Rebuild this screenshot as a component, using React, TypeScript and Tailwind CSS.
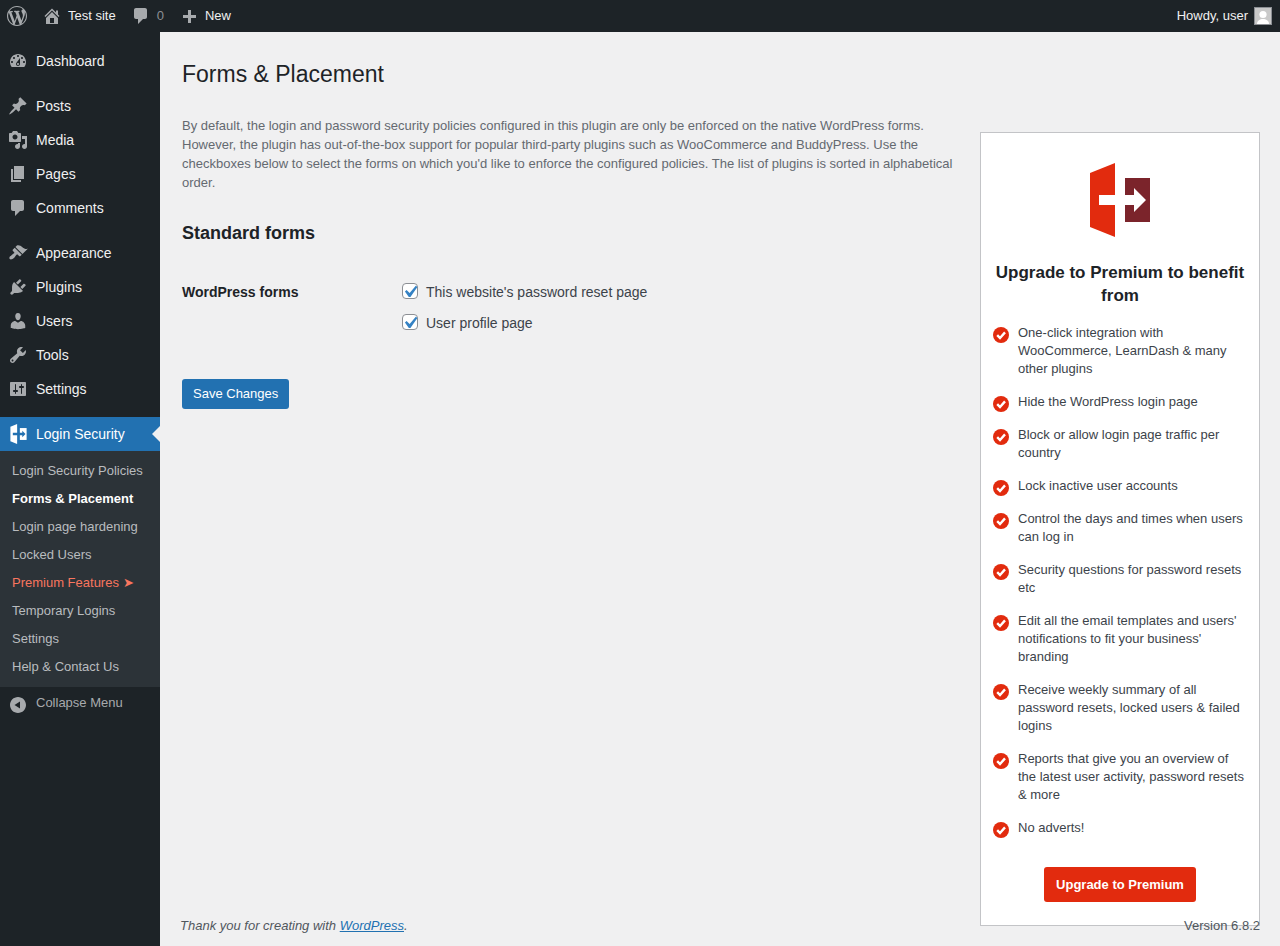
import React from "react";

const icons: Record<string, string> = {
  wordpress:
    "M20 10c0-5.51-4.49-10-10-10C4.48 0 0 4.49 0 10c0 5.52 4.48 10 10 10 5.51 0 10-4.48 10-10zM7.78 15.37L4.37 6.22c.55-.02 1.17-.08 1.17-.08.5-.06.44-1.13-.06-1.11 0 0-1.45.11-2.37.11-.18 0-.37 0-.58-.01C4.12 2.69 6.87 1.11 10 1.11c2.33 0 4.45.87 6.05 2.34-.68-.11-1.65.39-1.65 1.58 0 .74.45 1.36.9 2.1.35.61.55 1.36.55 2.46 0 1.49-1.4 5-1.4 5l-3.03-8.37c.54-.02.82-.17.82-.17.5-.05.44-1.25-.06-1.22 0 0-1.44.12-2.38.12-.87 0-2.33-.12-2.33-.12-.5-.03-.56 1.2-.06 1.22l.92.08 1.26 3.41zM17.41 10c.24-.64.74-1.87.43-4.25.7 1.29 1.05 2.71 1.05 4.25 0 3.29-1.73 6.24-4.4 7.78.97-2.59 1.94-5.2 2.92-7.78zM6.1 18.09C3.12 16.65 1.11 13.53 1.11 10c0-1.3.23-2.48.72-3.59C3.25 10.3 4.67 14.2 6.1 18.09zm4.03-6.63l2.58 6.98c-.86.29-1.76.45-2.71.45-.79 0-1.57-.11-2.29-.33.81-2.38 1.62-4.74 2.42-7.1z",
  home: "M16 8.5l1.53 1.53-1.06 1.06L10 4.62l-6.47 6.47-1.06-1.06L10 2.5l4 4v-2h2v4zm-6-2.46l6 5.99V18H4v-5.97zM12 17v-5H8v5h4z",
  comment:
    "M5 2h9c1.1 0 2 .9 2 2v7c0 1.1-.9 2-2 2h-2l-5 5v-5H5c-1.1 0-2-.9-2-2V4c0-1.1.9-2 2-2z",
  plus: "M17 7v3h-5v5H9v-5H4V7h5V2h3v5h5z",
  dashboard:
    "M3.76 16h12.48c1.1-1.37 1.76-3.11 1.76-5 0-4.42-3.58-8-8-8s-8 3.58-8 8c0 1.89.66 3.63 1.76 5zM10 4c.55 0 1 .45 1 1s-.45 1-1 1-1-.45-1-1 .45-1 1-1zM6 6c.55 0 1 .45 1 1s-.45 1-1 1-1-.45-1-1 .45-1 1-1zm8 0c.55 0 1 .45 1 1s-.45 1-1 1-1-.45-1-1 .45-1 1-1zm-5.37 5.55L12 7v6c0 1.1-.9 2-2 2s-2-.9-2-2c0-.57.24-1.08.63-1.45zM4 10c.55 0 1 .45 1 1s-.45 1-1 1-1-.45-1-1 .45-1 1-1zm12 0c.55 0 1 .45 1 1s-.45 1-1 1-1-.45-1-1 .45-1 1-1zm-5 3c0-.55-.45-1-1-1s-1 .45-1 1 .45 1 1 1 1-.45 1-1z",
  post: "M10.44 3.02l1.82-1.82 6.36 6.35-1.83 1.82c-1.05-.68-2.48-.57-3.41.36l-.75.75c-.92.93-1.04 2.35-.35 3.41l-1.83 1.82-2.41-2.41-2.8 2.79c-.42.42-3.38 2.71-3.8 2.29s1.86-3.39 2.28-3.81l2.79-2.79L4.1 9.36l1.83-1.82c1.05.69 2.48.57 3.4-.36l.75-.75c.93-.92 1.05-2.35.36-3.41z",
  media:
    "M13 11V4c0-.55-.45-1-1-1h-1.67L9 1H5L3.67 3H2c-.55 0-1 .45-1 1v7c0 .55.45 1 1 1h10c.55 0 1-.45 1-1zM7 4.5c1.38 0 2.5 1.12 2.5 2.5S8.38 9.5 7 9.5 4.5 8.38 4.5 7 5.62 4.5 7 4.5zM14 6h5v10.5c0 1.38-1.12 2.5-2.5 2.5S14 17.88 14 16.5s1.12-2.5 2.5-2.5c.17 0 .34.02.5.05V9h-3V6zm-4 8.05V13h2v3.5c0 1.38-1.12 2.5-2.5 2.5S7 17.88 7 16.5 8.12 14 9.5 14c.17 0 .34.02.5.05z",
  page: "M6 15V2h10v13H6zm-1 1h8v2H3V5h2v11z",
  appearance:
    "M14.48 11.06L7.41 3.99l1.5-1.5c.5-.56 2.3-.47 3.51.32 1.21.8 1.43 1.28 2.91 2.1 1.18.64 2.45 1.26 4.45.85zm-.71.71L6.7 4.7 4.93 6.47c-.39.39-.39 1.02 0 1.41l1.06 1.06c.39.39.39 1.03 0 1.42-.6.6-1.43 1.11-2.21 1.69-.35.26-.7.53-1.01.84C1.43 13.23.91 15.24 1.76 16.09c.85.85 2.86.33 4.22-1.03.31-.31.58-.66.85-1.02.57-.78 1.08-1.61 1.69-2.21.39-.39 1.02-.39 1.41 0l1.06 1.06c.39.39 1.02.39 1.41 0z",
  plugins:
    "M13.11 4.36L9.87 7.6 8 5.73l3.24-3.24c.35-.34 1.05-.2 1.56.32.52.51.66 1.21.31 1.55zm-8 1.77l.91-1.12 9.01 9.01-1.19.84c-.71.71-2.63 1.16-3.82 1.16H6.14L4.9 17.26c-.59.59-1.54.59-2.12 0-.59-.58-.59-1.53 0-2.12l1.24-1.24v-3.88c0-1.13.4-3.19 1.09-3.89zm7.26 3.97l3.24-3.24c.34-.35 1.04-.21 1.55.31.52.51.66 1.21.31 1.55l-3.24 3.25z",
  users:
    "M10 9.25c-2.27 0-2.73-3.44-2.73-3.44C7 4.02 7.82 2 9.97 2c2.16 0 2.98 2.02 2.71 3.81 0 0-.41 3.44-2.68 3.44zm0 2.57L12.72 10c2.39 0 4.52 2.33 4.52 4.53v2.49s-3.65 1.13-7.24 1.13c-3.65 0-7.24-1.13-7.24-1.13v-2.49c0-2.25 1.94-4.48 4.47-4.48z",
  tools:
    "M16.68 9.77c-1.34 1.34-3.3 1.67-4.95.99l-5.41 6.52c-.99.99-2.59.99-3.58 0s-.99-2.59 0-3.57l6.52-5.42c-.68-1.65-.35-3.61.99-4.95 1.28-1.28 3.12-1.62 4.72-1.06l-2.89 2.89 2.82 2.82 2.86-2.87c.53 1.58.18 3.39-1.08 4.65zM3.81 16.21c.4.39 1.04.39 1.43 0 .4-.4.4-1.04 0-1.43-.39-.4-1.03-.4-1.43 0-.39.39-.39 1.03 0 1.43z",
  settings:
    "M18 16V4c0-.55-.45-1-1-1H3c-.55 0-1 .45-1 1v12c0 .55.45 1 1 1h14c.55 0 1-.45 1-1zM8 11h1c.55 0 1 .45 1 1s-.45 1-1 1H8v1.5c0 .28-.22.5-.5.5s-.5-.22-.5-.5V13H6c-.55 0-1-.45-1-1s.45-1 1-1h1V5.5c0-.28.22-.5.5-.5s.5.22.5.5V11zm5-2h-1c-.55 0-1-.45-1-1s.45-1 1-1h1V5.5c0-.28.22-.5.5-.5s.5.22.5.5V7h1c.55 0 1 .45 1 1s-.45 1-1 1h-1v5.5c0 .28-.22.5-.5.5s-.5-.22-.5-.5V9z",
  collapse:
    "M10 2c4.42 0 8 3.58 8 8s-3.58 8-8 8-8-3.58-8-8 3.58-8 8-8zm2 4.5L6.5 10l5.5 3.5z",
};

function Dash({ name, className }: { name: string; className: string }) {
  return (
    <svg viewBox="0 0 20 20" fill="currentColor" className={className}>
      <path d={icons[name]} fillRule="evenodd" />
    </svg>
  );
}

// the plugin's door + arrow mark
function LogoMark({ door, box, arrow, className }: { door: string; box: string; arrow: string; className: string }) {
  return (
    <svg viewBox="0 0 60 74" className={className}>
      <path d="M0 10 25 0v74L0 64z" fill={door} />
      <rect x="35" y="15" width="25" height="44" fill={box} />
      <path d="M9 32h35v-7l12 12-12 12v-7H9z" fill={arrow} />
    </svg>
  );
}

function MenuItem({ icon, label }: { icon: string; label: string }) {
  return (
    <div className="flex h-[34px] items-center text-[14px] text-[#f0f0f1]">
      <Dash name={icon} className="ml-[8px] mr-[8px] h-5 w-5 text-[#a7aaad]" />
      <span>{label}</span>
    </div>
  );
}

function Check() {
  return (
    <span className="-mt-[2px] flex h-4 w-4 items-center justify-center rounded-[4px] border border-[#8c8f94] bg-white">
      <svg viewBox="0 0 20 20" className="h-6 w-6 shrink-0 translate-y-[1px]" fill="#3582c4">
        <path d="M14.83 4.89l1.34.94-5.81 8.38H9.02L5.78 9.67l1.34-1.25 2.57 2.4z" />
      </svg>
    </span>
  );
}

const submenu = [
  "Login Security Policies",
  "Forms & Placement",
  "Login page hardening",
  "Locked Users",
  "Premium Features ➤",
  "Temporary Logins",
  "Settings",
  "Help & Contact Us",
];

const benefits = [
  "One-click integration with WooCommerce, LearnDash & many other plugins",
  "Hide the WordPress login page",
  "Block or allow login page traffic per country",
  "Lock inactive user accounts",
  "Control the days and times when users can log in",
  "Security questions for password resets etc",
  "Edit all the email templates and users' notifications to fit your business' branding",
  "Receive weekly summary of all password resets, locked users & failed logins",
  "Reports that give you an overview of the latest user activity, password resets & more",
  "No adverts!",
];

export default function App() {
  return (
    <div className="relative flex h-[946px] flex-col overflow-hidden bg-[#f0f0f1] font-['Liberation_Sans',Arial,sans-serif] text-[13px] text-[#3c434a]">
      {/* admin bar */}
      <header className="flex h-8 shrink-0 items-center bg-[#1d2327] text-[13px] text-[#f0f0f1]">
        <Dash name="wordpress" className="ml-[7px] h-5 w-5 text-[#a7aaad]" />
        <Dash name="home" className="ml-[15px] h-5 w-5 text-[#a7aaad]" />
        <span className="ml-[6px]">Test site</span>
        <Dash name="comment" className="ml-[15px] h-5 w-5 text-[#a7aaad]" />
        <span className="ml-[6px] text-[#8c8f94]">0</span>
        <Dash name="plus" className="ml-[15px] mt-[3px] h-5 w-5 text-[#a7aaad]" />
        <span className="ml-[6px]">New</span>
        <span className="ml-auto">Howdy, user</span>
        <span className="ml-[6px] mr-[8px] flex h-[18px] w-[18px] items-end justify-center overflow-hidden border border-[#8c8f94] bg-[#c9c9c9]">
          <svg viewBox="0 0 16 16" className="h-4 w-4" fill="#fff">
            <circle cx="8" cy="6.5" r="3.6" />
            <path d="M2 16c0-3.5 3-5 6-5s6 1.5 6 5z" />
          </svg>
        </span>
      </header>

      <div className="flex min-h-0 flex-1">
        {/* sidebar */}
        <aside className="flex w-40 shrink-0 flex-col bg-[#1d2327] pt-3">
          <MenuItem icon="dashboard" label="Dashboard" />
          <div className="h-[11px]" />
          <MenuItem icon="post" label="Posts" />
          <MenuItem icon="media" label="Media" />
          <MenuItem icon="page" label="Pages" />
          <MenuItem icon="comment" label="Comments" />
          <div className="h-[11px]" />
          <MenuItem icon="appearance" label="Appearance" />
          <MenuItem icon="plugins" label="Plugins" />
          <MenuItem icon="users" label="Users" />
          <MenuItem icon="tools" label="Tools" />
          <MenuItem icon="settings" label="Settings" />
          <div className="h-[11px]" />
          <div className="relative flex h-[34px] items-center bg-[#2271b1] text-[14px] text-white">
            <LogoMark door="#fff" box="#fff" arrow="#2271b1" className="ml-[10px] mr-[9px] h-5 w-[17px]" />
            <span>Login Security</span>
            <span className="absolute right-0 top-[9px] h-0 w-0 border-y-[8px] border-r-[8px] border-y-transparent border-r-[#f0f0f1]" />
          </div>
          <div className="flex h-[236px] flex-col bg-[#2c3338] pt-[6px]">
            {submenu.map((item) => (
              <div
                key={item}
                className={
                  item === "Forms & Placement"
                    ? "flex h-7 items-center pl-3 font-bold text-white"
                    : item.startsWith("Premium")
                      ? "flex h-7 items-center pl-3 text-[#f8765f]"
                      : "flex h-7 items-center pl-3 text-[#b9bcbf]"
                }
              >
                {item}
              </div>
            ))}
          </div>
          <div className="flex h-[34px] items-center text-[#a7aaad]">
            <Dash name="collapse" className="ml-[8px] mr-[8px] mt-[1px] h-5 w-5" />
            <span className="-mt-[2px]">Collapse Menu</span>
          </div>
        </aside>

        {/* main */}
        <main className="flex min-w-0 flex-1 pl-[22px] pr-5">
          <div className="w-[798px] shrink-0 pr-[24px]">
            <h1 className="mt-[27px] text-[23px] leading-[30px] text-[#1d2327]">Forms &amp; Placement</h1>
            <p className="mt-[27px] text-[13px] leading-[19px] text-[#646970]">
              By default, the login and password security policies configured in this plugin are only be enforced on the native WordPress forms. However, the plugin has out-of-the-box support for popular third-party plugins such as WooCommerce and BuddyPress. Use the checkboxes below to select the forms on which you'd like to enforce the configured policies. The list of plugins is sorted in alphabetical order.
            </p>
            <h2 className="mt-[26px] text-[18px] font-bold leading-[30px] text-[#1d2327]">Standard forms</h2>
            <div className="mt-[33px] flex">
              <div className="w-[220px] pt-[1px] text-[14px] font-bold leading-5 text-[#1d2327]">WordPress forms</div>
              <div className="flex flex-col gap-[11px] pt-[1px] text-[14px] leading-5">
                <label className="flex items-center gap-2">
                  <Check />
                  This website's password reset page
                </label>
                <label className="flex items-center gap-2">
                  <Check />
                  User profile page
                </label>
              </div>
            </div>
            <button className="mt-[46px] h-[30px] rounded-[3px] bg-[#2271b1] px-[11px] text-[13px] text-white">Save Changes</button>
          </div>

          <section className="mt-[100px] flex h-[794px] w-[280px] shrink-0 flex-col border border-[#c3c4c7] bg-white">
            <LogoMark door="#e22b0e" box="#7b242b" arrow="#fff" className="mx-auto mt-[30px] h-[74px] w-[60px]" />
            <h3 className="mt-[24px] px-3 text-center text-[17px] font-bold leading-[23px] text-[#1d2327]">Upgrade to Premium to benefit from</h3>
            <ul className="mt-[17px] flex flex-col gap-[15px] pl-3 pr-3">
              {benefits.map((b) => (
                <li key={b} className="flex text-[13px] leading-[18px]">
                  <svg viewBox="0 0 16 16" className="-mb-[1px] mr-[9px] mt-[3px] h-4 w-4 shrink-0">
                    <circle cx="8" cy="8" r="8" fill="#e22b0e" />
                    <path d="M4.2 8.2 7 11l5-5.6" fill="none" stroke="#fff" strokeWidth="2.4" />
                  </svg>
                  <span>{b}</span>
                </li>
              ))}
            </ul>
            <button className="mx-auto mt-[30px] h-[35px] w-[152px] rounded-[3px] bg-[#e22b0e] text-[13px] font-bold text-white">Upgrade to Premium</button>
          </section>
        </main>
      </div>

      {/* footer sits over the card, as in wp-admin */}
      <footer className="absolute bottom-[11px] left-[180px] right-[20px] flex justify-between leading-[18px] text-[#50575e]">
        <span className="italic">
          Thank you for creating with <a className="text-[#2271b1] underline">WordPress</a>.
        </span>
        <span>Version 6.8.2</span>
      </footer>
    </div>
  );
}
